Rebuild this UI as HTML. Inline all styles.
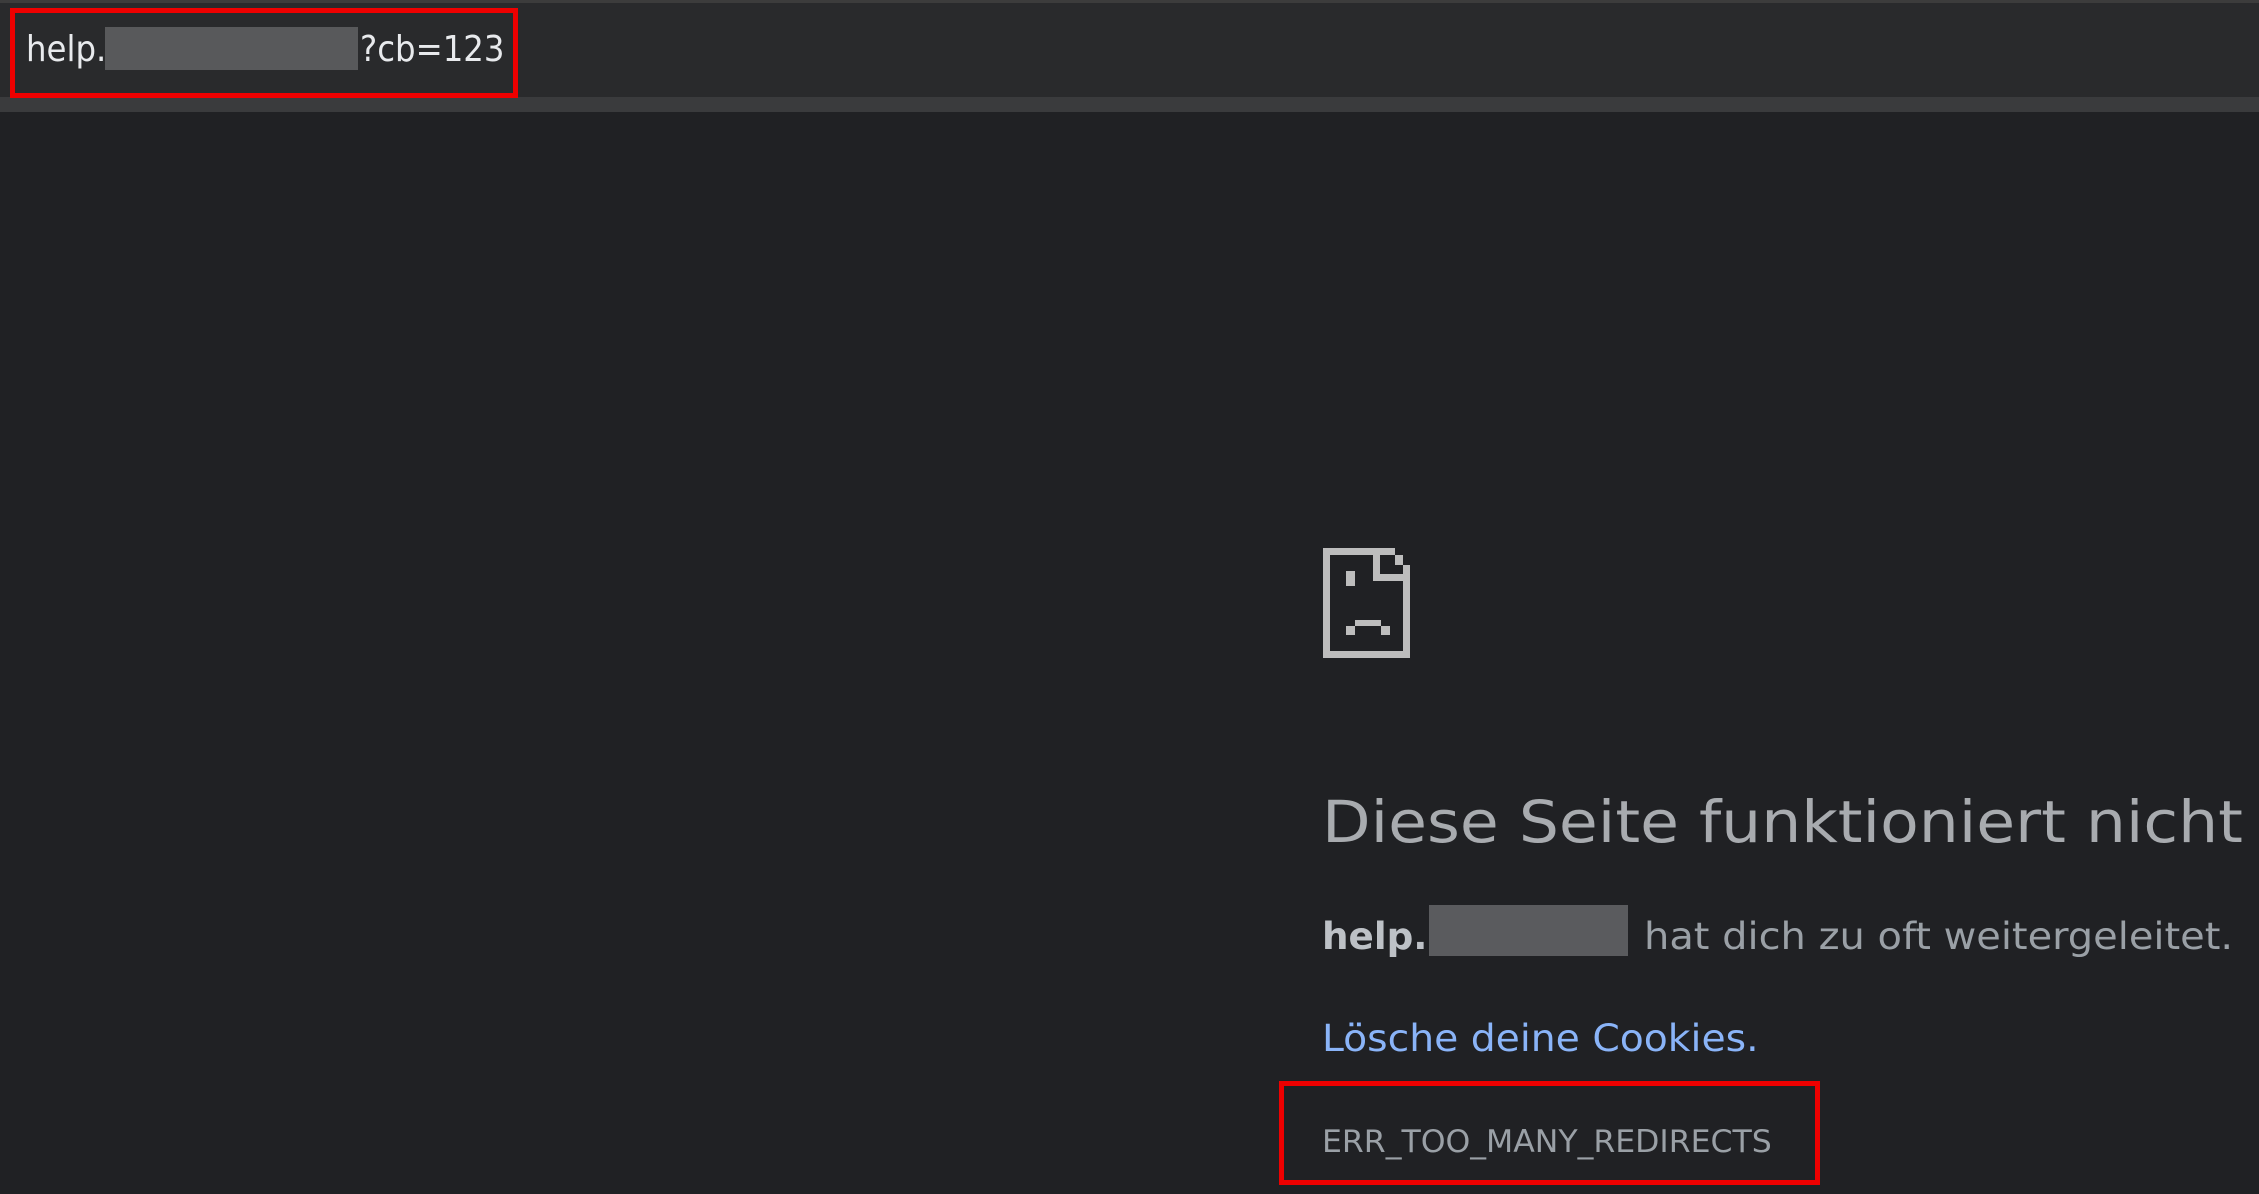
<!DOCTYPE html>
<html><head><meta charset="utf-8"><style>
html,body{margin:0;padding:0;width:2259px;height:1194px;overflow:hidden;background:#202124;font-family:"DejaVu Sans","Liberation Sans",sans-serif;}
.top{position:absolute;left:0;top:0;width:2259px;height:3px;background:#3c3c3c}
.bar{position:absolute;left:0;top:3px;width:2259px;height:94px;background:#292a2c}
.strip{position:absolute;left:0;top:97px;width:2259px;height:15px;background:#3a3b3d}
.box{position:absolute;border:5px solid #ee0000;box-sizing:border-box}
.t{position:absolute;white-space:nowrap;font-family:'DejaVu Sans Condensed','DejaVu Sans',sans-serif;transform-origin:0 0}
.blur{position:absolute;background:#5a5b5e}
</style></head><body>
<div class="top"></div><div class="bar"></div><div class="strip"></div>
<div class="box" style="left:10px;top:8px;width:508px;height:90px"></div>
<div class="t" style="left:26px;top:30px;font-size:36px;line-height:40px;color:#e8eaed">help.</div>
<div class="blur" style="left:105px;top:27px;width:253px;height:43px;background:#58595b"></div>
<div class="t" style="left:360px;top:30px;font-size:36px;line-height:40px;color:#e8eaed">?cb=123</div>

<svg style="position:absolute;left:1323px;top:548px" width="88" height="111" viewBox="0 0 88 111">
<g fill="#bdbdbd">
<rect x="0" y="0" width="7" height="110"/>
<rect x="0" y="103" width="87" height="7"/>
<rect x="80" y="17" width="7" height="93"/>
<rect x="0" y="0" width="72" height="7"/>
<rect x="72" y="7" width="8" height="10"/>
<rect x="50" y="7" width="7" height="26"/>
<rect x="50" y="26" width="37" height="7"/>
<rect x="23" y="23" width="9" height="15"/>
<rect x="32" y="72" width="26" height="6"/>
<rect x="23" y="78" width="9" height="9"/>
<rect x="58" y="78" width="9" height="9"/>
</g></svg>

<div class="t" style="left:1322px;top:787px;font-size:58px;line-height:70px;color:#a8abaf;transform:scaleX(1.21)">Diese Seite funktioniert nicht</div>
<div class="t" style="left:1322px;top:914px;font-size:37px;line-height:46px;color:#bdc1c6;font-weight:bold;transform:scaleX(1.12)">help.</div>
<div class="blur" style="left:1429px;top:905px;width:199px;height:51px"></div>
<div class="t" style="left:1644px;top:914px;font-size:37px;line-height:46px;color:#9aa0a6;transform:scaleX(1.2)">hat dich zu oft weitergeleitet.</div>
<div class="t" style="left:1322px;top:1016px;font-size:37px;line-height:46px;color:#8ab4f8;transform:scaleX(1.18)">Lösche deine Cookies.</div>
<div class="t" style="left:1322px;top:1122px;font-size:31px;line-height:40px;color:#9aa0a6;transform:scaleX(1.13)">ERR_TOO_MANY_REDIRECTS</div>
<div class="box" style="left:1279px;top:1081px;width:541px;height:104px"></div>
</body></html>
